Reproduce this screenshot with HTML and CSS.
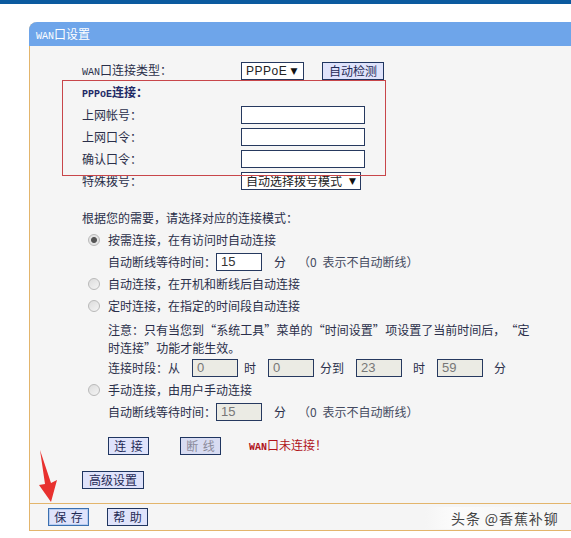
FILE: index.html
```html
<!DOCTYPE html>
<html lang="zh-CN">
<head>
<meta charset="utf-8">
<title>WAN口设置</title>
<link rel="stylesheet" href="styles.css">
</head>
<body>
<div class="topbar"></div>
<main class="panel">
  <h1 class="panel-title"><span class="latin">WAN</span>口设置</h1>
  <div class="content">
    <div class="row"><span class="label"><span class="latin">WAN</span>口连接类型&#xFF1A;</span><span class="select sel-type">PPPoE<span class="caret">▼</span></span><button class="btn btn-detect">自动检测</button></div>
    <div class="row"><b class="label strong"><span class="latin">PPPoE</span>连接&#xFF1A;</b></div>
    <div class="row"><span class="label">上网帐号&#xFF1A;</span><input class="field" type="text"></div>
    <div class="row"><span class="label">上网口令&#xFF1A;</span><input class="field" type="text"></div>
    <div class="row"><span class="label">确认口令&#xFF1A;</span><input class="field" type="text"></div>
    <div class="row"><span class="label">特殊拨号&#xFF1A;</span><span class="select sel-dial">自动选择拨号模式<span class="caret">▼</span></span></div>

    <div class="row row-intro">根据您的需要&#xFF0C;请选择对应的连接模式&#xFF1A;</div>
    <div class="row opt"><span class="radio radio-on"></span>按需连接&#xFF0C;在有访问时自动连接</div>
    <div class="row sub"><span>自动断线等待时间&#xFF1A;</span><span class="num">15</span><span class="unit">分</span><span class="hint">&#xFF08;0 表示不自动断线&#xFF09;</span></div>
    <div class="row opt"><span class="radio"></span>自动连接&#xFF0C;在开机和断线后自动连接</div>
    <div class="row opt"><span class="radio"></span>定时连接&#xFF0C;在指定的时间段自动连接</div>
    <div class="note">注意&#xFF1A;只有当您到 &#x201C;系统工具&#x201D; 菜单的 &#x201C;时间设置&#x201D; 项设置了当前时间后&#xFF0C; &#x201C;定<br>时连接&#x201D; 功能才能生效&#x3002;</div>
    <div class="row sub times">
      <span>连接时段&#xFF1A;从</span><span class="num off">0</span><span class="after">时</span><span class="num off">0</span><span class="after">分到</span><span class="num off">23</span><span class="wide-unit">时</span><span class="num off">59</span><span class="wide-unit">分</span>
    </div>
    <div class="row opt"><span class="radio"></span>手动连接&#xFF0C;由用户手动连接</div>
    <div class="row sub"><span>自动断线等待时间&#xFF1A;</span><span class="num off">15</span><span class="unit">分</span><span class="hint">&#xFF08;0 表示不自动断线&#xFF09;</span></div>
    <div class="row actions"><button class="btn btn-spaced">连 接</button><button class="btn btn-spaced btn-off">断 线</button><span class="status"><span class="latin">WAN</span>口未连接&#xFF01;</span></div>
    <div class="row advanced"><button class="btn btn-adv">高级设置</button></div>
  </div>
  <footer class="footer">
    <button class="btn btn-spaced btn-focus">保 存</button><button class="btn btn-spaced">帮 助</button>
  </footer>
</main>
<div class="callout"></div>
<svg class="arrow" width="24" height="60" viewBox="0 0 24 60"><path d="M3 1 L14 34 L20 31 L14 53 L2 36 L8 35 Z" fill="#e8312f"/></svg>
<div class="mark">头条 @香蕉补铆</div>
</body>
</html>
```
FILE: styles.css
```css
* { box-sizing: border-box; }
html, body { margin: 0; padding: 0; }
body {
  width: 571px;
  height: 538px;
  position: relative;
  overflow: hidden;
  background: #fff;
  color: #2a2f4a;
  font: 12px/22px "Noto Sans CJK SC", sans-serif;
}
.topbar { height: 4px; background: #0b5a9f; margin-bottom: 18px; }
.panel {
  margin-left: 29px;
  width: 560px;
  height: 509px;
  background: #f5f5f5;
  border-left: 1px solid #e3b56c;
  border-bottom: 1px solid #e3b56c;
  border-radius: 8px 0 0 0;
  display: flex;
  flex-direction: column;
}
.panel-title {
  margin: 0 0 0 -1px;
  height: 24px;
  padding-left: 7px;
  background: #6ea5ea;
  border-radius: 8px 0 0 0;
  color: #fff;
  font-size: 12px;
  font-weight: 400;
  line-height: 24px;
}
.latin { font-family: "Liberation Mono", monospace; font-size: 10px; letter-spacing: 0; }
.strong .latin, .status .latin { font-weight: 700; }
.content { padding: 14px 0 0 52px; flex: 1; }
.row { display: flex; align-items: center; height: 22px; white-space: pre; }
.label { width: 159px; flex: none; }
.strong { color: #1f2a66; }
.select {
  height: 18px;
  display: flex;
  align-items: center;
  justify-content: space-between;
  border: 1px solid #26395f;
  background: #fff;
  color: #222;
}
.sel-type { width: 63px; padding: 0 5px 0 4px; font: 12px "Liberation Sans", sans-serif; letter-spacing: .5px; }
.sel-dial { width: 120px; padding: 0 4px; }
.caret { font: 9px "DejaVu Sans", sans-serif; color: #111; }
.btn {
  height: 18px;
  padding: 0;
  border: 1px solid #1f3560;
  background: #dfe3fb;
  color: #1f2a55;
  font: 12px/16px "Noto Sans CJK SC", sans-serif;
  text-align: center;
}
.btn-detect { width: 62px; margin-left: 18px; }
.field { width: 124px; height: 18px; padding: 0 3px; border: 1px solid #26395f; background: #fff; }
.row-intro { margin-top: 15px; }
.opt { padding-left: 26px; position: relative; }
.radio {
  position: absolute;
  left: 6px;
  top: 5px;
  width: 12px;
  height: 12px;
  border-radius: 50%;
  border: 1px solid #b9b9b9;
  background: linear-gradient(145deg, #dcdcdc, #f4f4f4);
}
.radio-on { background: radial-gradient(circle, #555 0 2.5px, #e4e4e4 3.5px); }
.sub { padding-left: 26px; }
.num {
  width: 46px;
  height: 18px;
  padding-left: 4px;
  border: 1px solid #26395f;
  background: #fff;
  font: 13px/16px "Liberation Sans", sans-serif;
  color: #333;
}
.off { background: #ebebe4; color: #777; }
.unit { margin-left: 12px; }
.hint { margin-left: 12px; color: #444a60; word-spacing: 3px; }
.note { margin-left: 26px; line-height: 18px; padding: 4px 0 0; height: 40px; white-space: nowrap; word-spacing: -2.4px; }
.times .num { margin-left: 12px; }
.times .after { margin-left: 6px; }
.times .wide-unit { margin-left: 11px; }
.actions { margin-top: 12px; padding-left: 26px; }
.btn-spaced { width: 41px; word-spacing: 2px; }
.btn-off { color: #8a8a9a; background: #d8dcf2; margin-left: 31px; }
.status { margin-left: 28px; color: #b0131a; }
.advanced { margin-top: 12px; }
.btn-adv { width: 62px; }
.footer {
  height: 27px;
  border-top: 1px solid #e3b56c;
  padding: 4px 0 0 18px;
  display: flex;
  gap: 18px;
  align-items: flex-start;
}
.btn-focus { border-color: #3a6fb0; box-shadow: inset 0 0 0 1px #b9cdf0; }
.callout {
  position: absolute;
  left: 62px;
  top: 80px;
  width: 324px;
  height: 96px;
  border: 1px solid #c8464a;
}
.arrow { position: absolute; left: 37px; top: 449px; }
.mark {
  position: absolute;
  left: 425px;
  top: 507px;
  padding-left: 26px;
  background: linear-gradient(90deg, #f5f5f5, #fbfbfb 20%, #f5f5f5);
  color: #444;
  font-size: 14px;
  letter-spacing: .9px;
}
```
